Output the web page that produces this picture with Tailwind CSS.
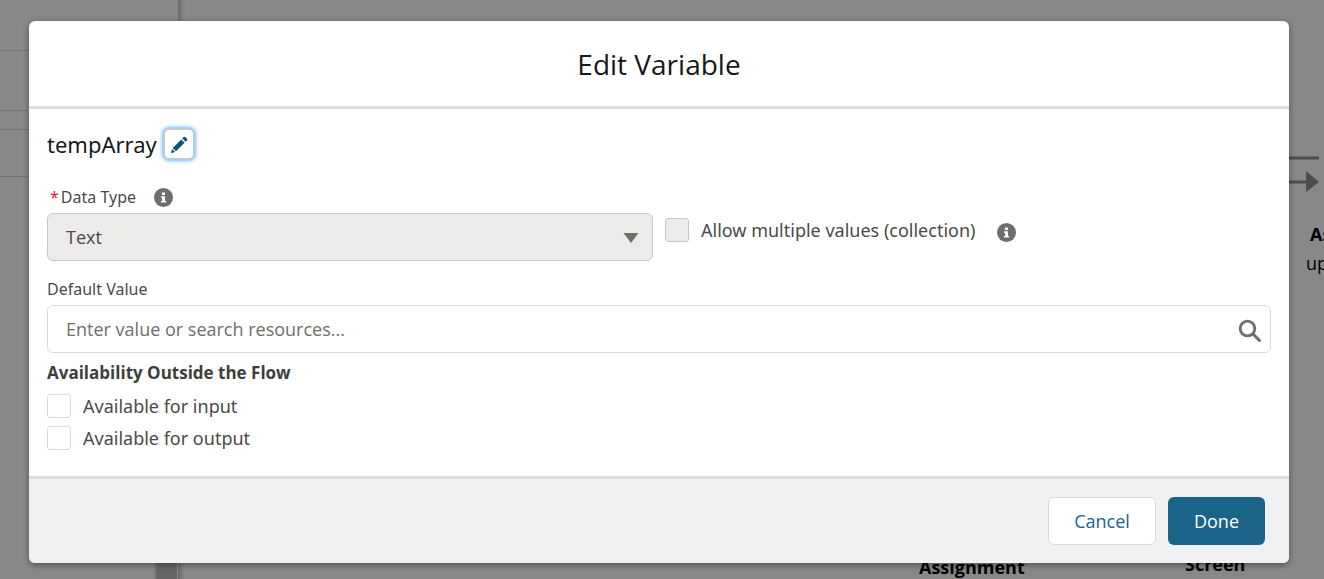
<!DOCTYPE html>
<html lang="en">

<head>
  <meta charset="UTF-8" />
  <meta name="viewport" content="width=device-width, initial-scale=1.0" />
  <title>Edit Variable</title>
  <script src="https://cdn.jsdelivr.net/npm/@tailwindcss/browser@4"></script>
</head>

<body class="relative min-h-screen overflow-hidden bg-[#888888] font-['Open_Sans','Noto_Sans',sans-serif] text-lg text-[#4a4a48]">
  <!-- flow builder behind the modal -->
  <div class="absolute inset-0 flex overflow-hidden" aria-hidden="true">
    <div class="flex w-[180px] shrink-0 flex-col border-r-2 border-[#6e6e6e] shadow-[2px_0_3px_rgba(0,0,0,0.16)]">
      <div class="h-[51px] border-b border-[#737373]"></div>
      <div class="h-[60px] border-b border-[#737373]"></div>
      <div class="h-[19px] border-b border-[#737373]"></div>
      <div class="h-[47px] border-b border-[#737373]"></div>
      <div class="mr-px w-[23px] flex-1 self-end border-l-2 border-[#7c7c7c] bg-[#666666]"></div>
    </div>
    <div class="relative flex-1 text-black">
      <svg class="absolute top-[150px] right-[5px] h-[50px] w-[60px]" viewBox="0 0 60 50">
        <path d="M0 8H60M0 32H48" stroke="#4d4d4f" stroke-width="3" />
        <path d="M47 21L60 32L47 42Z" fill="#4d4d4f" />
      </svg>
      <div class="absolute top-[220px] left-[1130px] font-bold">Assignment</div>
      <div class="absolute top-[249px] left-[1126px]">update</div>
      <div class="absolute top-[553px] left-[739px] font-bold">Assignment</div>
      <div class="absolute top-[550px] left-[1005px] font-bold">Screen</div>
    </div>
  </div>

  <section role="dialog" aria-modal="true" aria-labelledby="title"
    class="relative mt-[21px] mr-[35px] ml-[29px] overflow-hidden rounded-md bg-white shadow-[0_2px_6px_rgba(0,0,0,0.4)]">
    <header class="border-b-3 border-[#dddbda] pt-[23px] pb-[21px] text-center">
      <h1 id="title" class="text-[28px] leading-[41px] text-[#181717]">Edit Variable</h1>
    </header>

    <form id="variable" class="px-[18px] pt-[19px] pb-[26px]">
      <div class="flex items-center gap-1.5">
        <h2 class="font-['Noto_Sans',sans-serif] text-[22px] leading-[30px] text-[#181717]">tempArray</h2>
        <button type="button" aria-label="Edit API name"
          class="flex h-8 w-8 items-center justify-center rounded-md border-2 border-[#b9cbdc] bg-white pt-0.5 shadow-[0_0_4px_#1b96ff]">
          <svg class="h-[18px] w-[18px]" viewBox="0 0 18 18" fill="#16517a">
            <path d="M1 17.200L2 12.900L5.200 16.100Z" />
            <path d="M2.700 12L11.300 3.400L14.600 6.700L6 15.300Z" />
            <path d="M12.300 2.400L13.700 1Q14.500 .4 15.200 1L17 2.800Q17.600 3.500 17 4.300L15.600 5.700Z" />
          </svg>
        </button>
      </div>

      <div class="mt-[25px] flex">
        <div class="w-[606px] shrink">
          <div class="flex items-center font-['Noto_Sans',sans-serif] text-base leading-6">
            <span class="pr-0.5 pl-[3px] text-[#e5173f]">*</span>
            <label for="type">Data Type</label>
            <svg class="ml-[18px] h-[19px] w-[19px]" viewBox="0 0 19 19">
              <circle cx="9.500" cy="9.500" r="9.500" fill="#706e6b" />
              <path d="M8 4.500h3v2.600H8zM7 8.300h4v4.600h1.200v1.700H6.900v-1.700h1.200V10H7z" fill="#fff" />
            </svg>
          </div>
          <div class="relative mt-1">
            <select id="type" disabled
              class="h-12 w-full appearance-none rounded-md border border-[#c9c7c5] bg-[#ecebea] px-[18px] opacity-100">
              <option>Text</option>
            </select>
            <svg class="pointer-events-none absolute top-5 right-[14px] h-[10px] w-4" viewBox="0 0 16 10">
              <path d="M.5 0h15L8 10Z" fill="#706e6b" />
            </svg>
          </div>
        </div>
        <div class="mt-[33px] ml-3 flex h-6 items-center font-['Noto_Sans',sans-serif]">
          <input id="multiple" type="checkbox" disabled
            class="h-6 w-6 appearance-none rounded-[3px] border border-[#c9c7c5] bg-[#ecebea]" />
          <label for="multiple" class="ml-3">Allow multiple values (collection)</label>
          <svg class="mt-1 ml-[22px] h-[19px] w-[19px]" viewBox="0 0 19 19">
            <circle cx="9.500" cy="9.500" r="9.500" fill="#706e6b" />
            <path d="M8 4.500h3v2.600H8zM7 8.300h4v4.600h1.200v1.700H6.900v-1.700h1.200V10H7z" fill="#fff" />
          </svg>
        </div>
      </div>

      <label for="value" class="mt-4 block font-['Noto_Sans',sans-serif] text-base leading-6">Default Value</label>
      <div class="relative mt-1">
        <input id="value" type="text" placeholder="Enter value or search resources..."
          class="h-12 w-full rounded-md border border-[#dddbda] bg-white pr-12 pl-[18px] placeholder:text-[#706e6b]" />
        <svg class="pointer-events-none absolute top-[14px] right-[9px] h-6 w-6" viewBox="0 0 24 24" fill="none" stroke="#706e6b">
          <circle cx="9.500" cy="9.500" r="7.300" stroke-width="2.800" />
          <path d="M15 15L21.500 21.500" stroke-width="3" stroke-linecap="round" />
        </svg>
      </div>

      <fieldset class="mt-2">
        <legend class="text-[17px] leading-6 font-bold text-[#3e3e3c]">Availability Outside the Flow</legend>
        <div class="mt-[9px] flex flex-col gap-2 font-['Noto_Sans',sans-serif]">
          <div class="flex h-6 items-center gap-3">
            <input id="input" type="checkbox" class="h-6 w-6 appearance-none rounded-[3px] border border-[#dddbda] bg-white" />
            <label for="input">Available for input</label>
          </div>
          <div class="flex h-6 items-center gap-3">
            <input id="output" type="checkbox" class="h-6 w-6 appearance-none rounded-[3px] border border-[#dddbda] bg-white" />
            <label for="output">Available for output</label>
          </div>
        </div>
      </fieldset>
    </form>

    <footer class="flex justify-end gap-3 border-t-3 border-[#dddbda] bg-[#f1f1f1] px-6 py-[18px]">
      <button type="button" class="h-12 w-[108px] rounded-md border border-[#dddbda] bg-white text-[#1a648c]">Cancel</button>
      <button type="submit" form="variable" class="h-12 w-[97px] rounded-md bg-[#1a6489] text-white">Done</button>
    </footer>
  </section>
</body>

</html>
